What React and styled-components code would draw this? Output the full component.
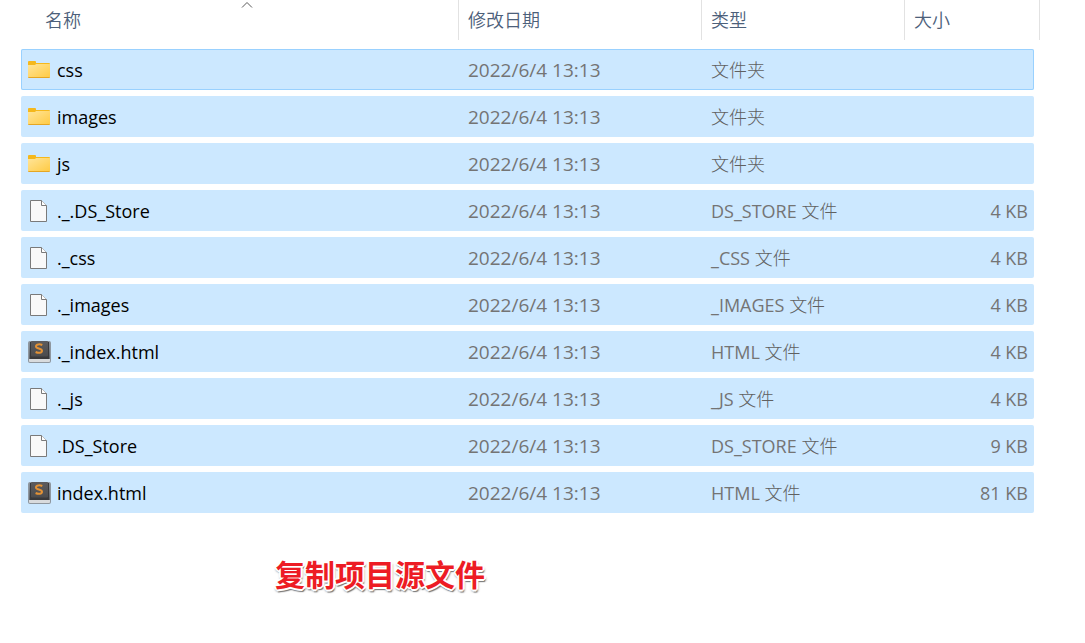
import styled, { createGlobalStyle } from 'styled-components';

const GlobalStyle = createGlobalStyle`
    body{
        margin: 0;
        background-color: #FFFFFF;
        font-family: "Open Sans", "Noto Sans CJK SC", sans-serif;
    }
`

const PageBlock = styled.main`
    padding: 0 51px 40px 21px;
`

const FileTable = styled.table`
    display: block;
    width: 100%;
    font-size: 18px;
    line-height: 24px;

    thead{
        display: block;
        margin-bottom: 9px;
    }
    tbody{
        display: flex;
        flex-direction: column;
        gap: 6px;
    }
`

const Row = styled.tr`
    display: grid;
    grid-template-columns: 438fr 243fr 203fr 129fr;
`

const HeadCell = styled.th`
    position: relative;
    box-sizing: border-box;
    height: 40px;
    padding: 8px 9px;
    border-right: 1px solid #E2E2E2;
    color: #4C607A;
    font-weight: 350;
    text-align: left;

    &:first-child{
        margin-left: 15px;
    }
    &:last-child{
        margin-right: -6px;
    }
`

const SortArrow = styled.svg`
    position: absolute;
    top: 1px;
    left: 50%;
    margin-left: -6px;
`

const FileRow = styled(Row)`
    box-sizing: border-box;
    height: 41px;
    align-items: center;
    border-radius: 2px;
    background-color: #CCE8FF;
    box-shadow: ${({ $focused }) => $focused ? 'inset 0 0 0 1px #99D1FF' : 'none'};
`

const Cell = styled.td`
    padding: 0 6px 0 9px;
    color: #747474;
    font-size: ${({ $large }) => $large ? '19px' : '18px'};
    text-align: ${({ $right }) => $right ? 'right' : 'left'};
    white-space: nowrap;
`

const NameCell = styled(Cell)`
    display: flex;
    align-items: center;
    gap: 6px;
    padding-left: 6px;
    color: #000000;
`

const Kind = styled.span`
    color: #606060;
    font-weight: 300;
`

const Icon = styled.svg`
    flex: none;
    width: 24px;
    height: 24px;
`

const Caption = styled.p`
    margin: 40px 0 0 254px;
    color: #ED1C24;
    font-size: 30px;
    font-weight: 700;
    line-height: 44px;
    text-shadow:
        -2px 0 0 #FFFFFF, 2px 0 0 #FFFFFF, 0 -2px 0 #FFFFFF, 0 2px 0 #FFFFFF,
        -1px -1px 0 #FFFFFF, 1px 1px 0 #FFFFFF, -1px 1px 0 #FFFFFF, 1px -1px 0 #FFFFFF,
        1px 3px 1px #777777, 2px 2px 2px #999999, -1px 2px 2px #AAAAAA;
`

const FolderIcon = () => (
    <Icon viewBox="0 0 24 24" aria-hidden="true">
        <defs>
            <linearGradient id="folder" x1="0" y1="0" x2="1" y2="1">
                <stop offset="0" stopColor="#FFE59A" />
                <stop offset="1" stopColor="#FFCB45" />
            </linearGradient>
        </defs>
        <path d="M1 4Q1 3 2 3H8Q9 3 9 4V5H22Q23 5 23 6V10H1Z" fill="#F5B81C" />
        <path d="M1 7H8L9 6H23V19H1Z" fill="url(#folder)" />
        <path d="M1 19H23Q23 20 22 20H2Q1 20 1 19Z" fill="#E5A623" />
    </Icon>
)

const BlankIcon = () => (
    <Icon viewBox="0 0 24 24" aria-hidden="true">
        <path d="M3.5 1.5H14.5L19.5 6.5V22.5H3.5Z" fill="#F9F9F9" stroke="#7A7A7A" />
        <path d="M14.5 1.5V6.5H19.5" fill="#FFFFFF" stroke="#7A7A7A" />
    </Icon>
)

const SublimeIcon = () => (
    <Icon viewBox="0 0 24 24" aria-hidden="true">
        <defs>
            <linearGradient id="key" x1="0" y1="0" x2="0" y2="1">
                <stop offset="0" stopColor="#5C5C5E" />
                <stop offset="1" stopColor="#4C4C4E" />
            </linearGradient>
        </defs>
        <rect x="1" y="1" width="23" height="22" rx="2" fill="#8F979F" />
        <path d="M2 19H23V21Q23 22 22 22H3Q2 22 2 21Z" fill="#D9DBDD" />
        <path d="M3 2H22L22.5 17V19H2.5V17Z" fill="#39393B" />
        <rect x="4" y="1" width="17" height="15.5" rx="1" fill="url(#key)" />
        <path d="M15.3 5C13 4 9 3.9 9 6.4C9 8.8 15 8.1 15 10.7C15 13.2 11 13.1 8.6 12" fill="none" stroke="#E39235" strokeWidth="2" />
    </Icon>
)

const icons = {
    folder: FolderIcon,
    blank: BlankIcon,
    sublime: SublimeIcon,
}

const files = [
    { name: 'css', icon: 'folder', ext: '', kind: '文件夹', size: '' },
    { name: 'images', icon: 'folder', ext: '', kind: '文件夹', size: '' },
    { name: 'js', icon: 'folder', ext: '', kind: '文件夹', size: '' },
    { name: '._.DS_Store', icon: 'blank', ext: 'DS_STORE ', kind: '文件', size: '4 KB' },
    { name: '._css', icon: 'blank', ext: '_CSS ', kind: '文件', size: '4 KB' },
    { name: '._images', icon: 'blank', ext: '_IMAGES ', kind: '文件', size: '4 KB' },
    { name: '._index.html', icon: 'sublime', ext: 'HTML ', kind: '文件', size: '4 KB' },
    { name: '._js', icon: 'blank', ext: '_JS ', kind: '文件', size: '4 KB' },
    { name: '.DS_Store', icon: 'blank', ext: 'DS_STORE ', kind: '文件', size: '9 KB' },
    { name: 'index.html', icon: 'sublime', ext: 'HTML ', kind: '文件', size: '81 KB' },
]

const FileItem = ({ file, focused }) => {
    const TypeIcon = icons[file.icon];

    return (
        <FileRow $focused={focused}>
            <NameCell><TypeIcon />{file.name}</NameCell>
            <Cell $large>2022/6/4 13:13</Cell>
            <Cell>{file.ext}<Kind>{file.kind}</Kind></Cell>
            <Cell $right>{file.size}</Cell>
        </FileRow>
    );
};

const App = () => {
    return (
        <>
            <GlobalStyle />
            <PageBlock lang="zh-CN">
                <FileTable>
                    <thead>
                        <Row>
                            <HeadCell scope="col" aria-sort="ascending">
                                <SortArrow width="12" height="8" viewBox="0 0 12 8" aria-hidden="true">
                                    <path d="M1 6.5L6 1.5L11 6.5" fill="none" stroke="#5A5A5A" />
                                </SortArrow>
                                名称
                            </HeadCell>
                            <HeadCell scope="col">修改日期</HeadCell>
                            <HeadCell scope="col">类型</HeadCell>
                            <HeadCell scope="col">大小</HeadCell>
                        </Row>
                    </thead>
                    <tbody>
                        {files.map((file, index) => (
                            <FileItem key={file.name} file={file} focused={index === 0} />
                        ))}
                    </tbody>
                </FileTable>
                <Caption>复制项目源文件</Caption>
            </PageBlock>
        </>
    );
};


export default App;
